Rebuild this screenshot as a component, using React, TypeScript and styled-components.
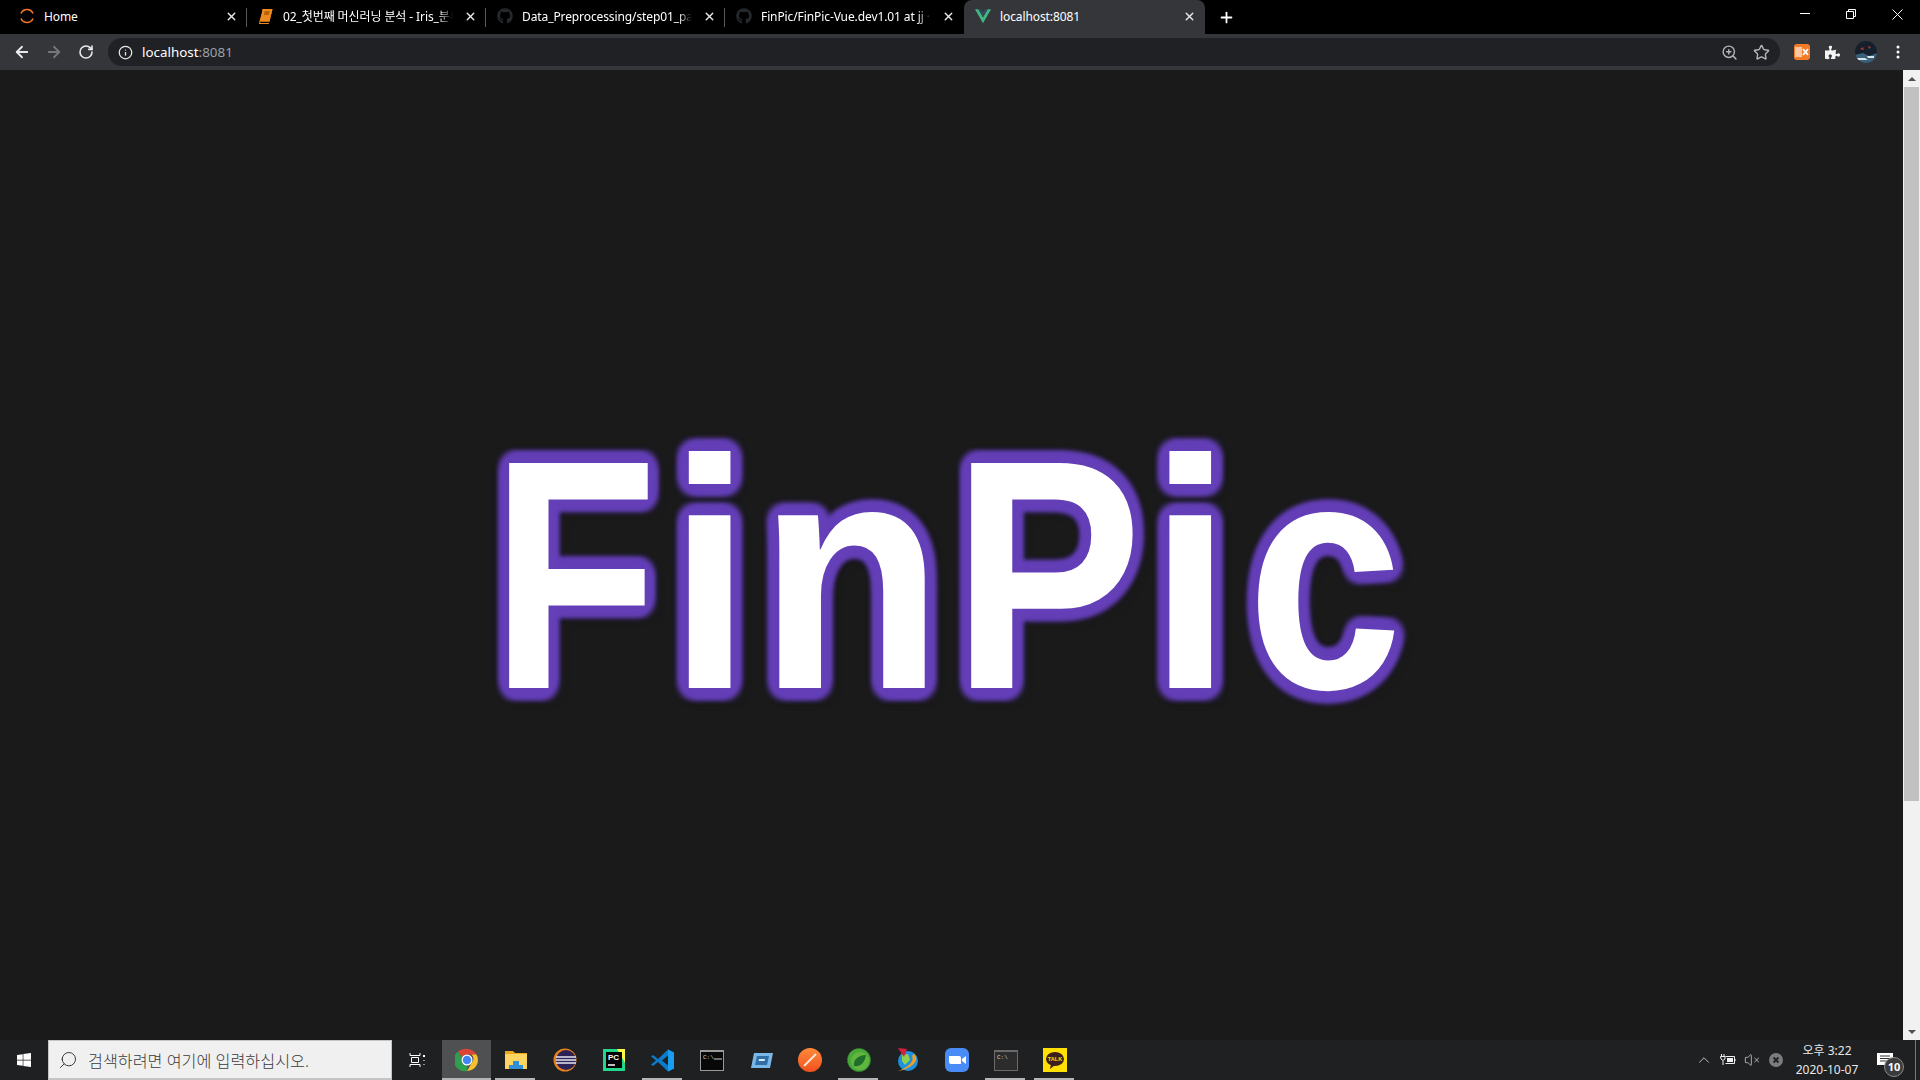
import React from "react";
import styled, { createGlobalStyle } from "styled-components";
import { ArrowLeft, ArrowRight, RotateCw, Info, ZoomIn, Star, X, Plus, ChevronUp, VolumeX, Search } from "lucide-react";
import { FaGithub, FaWindows, FaPuzzlePiece } from "react-icons/fa";

const ringShadow = (radius: number, blur: number, color: string, steps: number) =>
  Array.from({ length: steps }, (_, i) => {
    const a = (i / steps) * Math.PI * 2;
    return `${(Math.cos(a) * radius).toFixed(2)}px ${(Math.sin(a) * radius).toFixed(2)}px ${blur}px ${color}`;
  }).join(", ");

const GlobalStyle = createGlobalStyle`
  html, body { margin: 0; padding: 0; height: 100%; overflow: hidden; background: #1a1a1a; }
  * { box-sizing: border-box; }
`;

const Screen = styled.div`
  width: 1920px;
  height: 1080px;
  display: flex;
  flex-direction: column;
  font-family: "Noto Sans", "Noto Sans CJK KR", sans-serif;
  color: #fff;
  overflow: hidden;
`;

const TabStrip = styled.div`
  height: 34px;
  flex: none;
  background: #000;
  display: flex;
  padding-left: 8px;
`;

const Tab = styled.div<{ $active?: boolean; $last?: boolean }>`
  position: relative;
  width: ${(p) => (p.$active ? "241px" : "239px")};
  flex: none;
  display: flex;
  align-items: center;
  padding: 0 8px 2px 11px;
  gap: 9px;
  font-size: 12px;
  background: ${(p) => (p.$active ? "#35363a" : "transparent")};
  border-radius: ${(p) => (p.$active ? "8px 8px 0 0" : "0")};
  &::after {
    content: "";
    display: ${(p) => (p.$active || p.$last ? "none" : "block")};
    position: absolute;
    right: 0;
    top: 8px;
    bottom: 7px;
    width: 1px;
    background: #55585c;
  }
`;

const Favicon = styled.span`
  width: 16px;
  height: 16px;
  flex: none;
  display: flex;
  align-items: center;
  justify-content: center;
`;

const TabTitle = styled.span<{ $fade?: boolean }>`
  flex: 1;
  min-width: 0;
  overflow: hidden;
  white-space: nowrap;
  letter-spacing: -0.1px;
  mask-image: ${(p) => (p.$fade ? "linear-gradient(90deg, #000 92%, transparent)" : "none")};
`;

const TabClose = styled.span`
  width: 16px;
  height: 16px;
  flex: none;
  display: flex;
  align-items: center;
  justify-content: center;
  color: #e8eaed;
`;

const NewTab = styled.div`
  width: 42px;
  display: flex;
  align-items: center;
  justify-content: center;
  color: #fff;
`;

const WindowControls = styled.div`
  margin-left: auto;
  display: flex;
  height: 28px;
`;

const WindowButton = styled.div`
  width: 46px;
  display: flex;
  align-items: center;
  justify-content: center;
`;

const Toolbar = styled.div`
  height: 36px;
  flex: none;
  background: #35363a;
  display: flex;
  align-items: flex-start;
  padding-top: 4px;
`;

const NavGroup = styled.div`
  display: flex;
  padding-left: 6px;
  width: 108px;
`;

const NavButton = styled.div<{ $dim?: boolean }>`
  width: 32px;
  height: 28px;
  display: flex;
  align-items: center;
  justify-content: center;
  color: ${(p) => (p.$dim ? "#75777a" : "#e8eaed")};
`;

const Omnibox = styled.div`
  width: 1672px;
  height: 28px;
  background: #202124;
  border-radius: 14px;
  display: flex;
  align-items: center;
  padding: 0 9px 1px 10px;
  font-size: 13.4px;
`;

const SiteInfo = styled.span`
  display: flex;
  color: #e8eaed;
  margin-right: 9px;
  margin-top: 1px;
`;

const Host = styled.span`
  color: #fff;
`;

const Port = styled.span`
  color: #9aa0a6;
`;

const OmniIcons = styled.div`
  margin-left: auto;
  display: flex;
  gap: 15px;
  margin-top: 1px;
  color: #b4b6b8;
  padding-right: 1px;
`;

const Extensions = styled.div`
  display: flex;
  align-items: center;
  height: 28px;
  padding-left: 14px;
  gap: 14px;
`;

const OrangeExt = styled.div`
  width: 16px;
  height: 16px;
  border-radius: 3px;
  background: #f47b2a;
  display: flex;
  align-items: center;
  justify-content: center;
`;

const ExtSlot = styled.span<{ $narrow?: boolean }>`
  display: flex;
  width: ${(p) => (p.$narrow ? "13px" : "17px")};
  justify-content: center;
  color: #f1f3f4;
`;

const Middle = styled.div`
  flex: 1;
  min-height: 0;
  display: flex;
  background: #1a1a1a;
`;

const Content = styled.main`
  flex: 1;
  display: flex;
  justify-content: center;
  padding-top: 305px;
`;

const Logo = styled.h1`
  margin: 0;
  font-family: "Liberation Sans", sans-serif;
  font-weight: 700;
  font-size: 327px;
  line-height: 400px;
  height: 400px;
  color: #fff;
  transform: translateX(2px) scaleX(0.928);
  text-shadow: ${ringShadow(10.5, 7, "#6540b8", 16)}, ${ringShadow(6, 3, "#6540b8", 8)}, 6px 6px 16px rgba(0, 0, 0, 0.35);
`;

const Letter = styled.span<{ $track: number; $scale: number }>`
  display: inline-block;
  margin-right: ${(p) => p.$track}px;
  transform-origin: left center;
  transform: scaleX(${(p) => p.$scale});
`;

const Scrollbar = styled.div`
  width: 17px;
  flex: none;
  background: #f1f1f1;
  display: flex;
  flex-direction: column;
  align-items: center;
`;

const ScrollArrow = styled.div`
  height: 17px;
  width: 100%;
  flex: none;
  display: flex;
  align-items: center;
  justify-content: center;
`;

const Triangle = styled.span<{ $down?: boolean }>`
  width: 0;
  height: 0;
  border-left: 4px solid transparent;
  border-right: 4px solid transparent;
  border-${(p) => (p.$down ? "top" : "bottom")}: 4px solid #505050;
`;

const ScrollThumb = styled.div`
  width: 15px;
  height: 714px;
  flex: none;
  background: #c1c1c1;
`;

const ScrollSpacer = styled.div`
  flex: 1;
`;

const Taskbar = styled.footer`
  height: 40px;
  flex: none;
  background: #1f2021;
  display: flex;
  align-items: stretch;
`;

const StartButton = styled.div`
  width: 48px;
  display: flex;
  align-items: center;
  justify-content: center;
  color: #fff;
`;

const SearchBox = styled.div`
  width: 344px;
  background: #f0f0f0;
  border: 1px solid #c4c4c4;
  border-bottom-width: 2px;
  display: flex;
  align-items: center;
  padding-left: 9px;
  gap: 10px;
  color: #3b3b3b;
  font-size: 16.2px;
  font-weight: 300;
`;

const SearchGlyph = styled.span`
  display: flex;
  transform: scaleX(-1);
`;

const TaskView = styled.div`
  width: 50px;
  padding-right: 1px;
  display: flex;
  align-items: center;
  justify-content: center;
`;

const TaskCell = styled.div<{ $open?: boolean; $focus?: boolean }>`
  position: relative;
  width: 49px;
  display: flex;
  align-items: center;
  justify-content: center;
  background: ${(p) => (p.$focus ? "#4e5051" : "transparent")};
  &::after {
    content: "";
    display: ${(p) => (p.$open ? "block" : "none")};
    position: absolute;
    bottom: 0;
    left: ${(p) => (p.$focus ? "0" : "4px")};
    right: ${(p) => (p.$focus ? "0" : "5px")};
    height: 2px;
    background: #b4b5b5;
  }
`;

const Tray = styled.div`
  margin-left: auto;
  display: flex;
  align-items: center;
`;

const TrayIcon = styled.div<{ $w: number }>`
  width: ${(p) => p.$w}px;
  display: flex;
  justify-content: center;
  color: #f0f0f0;
`;

const Clock = styled.div`
  width: 72px;
  margin-left: 3px;
  text-align: center;
  font-size: 12px;
  line-height: 19px;
  color: #e8e8e8;
`;

const Notify = styled.div`
  position: relative;
  width: 46px;
  height: 100%;
  margin-left: 6px;
  display: flex;
  align-items: center;
  justify-content: flex-start;
  padding-left: 8px;
`;

const Badge = styled.span`
  position: absolute;
  left: 15px;
  top: 17px;
  width: 20px;
  height: 20px;
  border-radius: 50%;
  background: #3a3b3c;
  border: 1px solid #8a8a8a;
  font-size: 11px;
  font-weight: 700;
  line-height: 18px;
  text-align: center;
`;

const DesktopEdge = styled.div`
  width: 5px;
  height: 100%;
  border-left: 1px solid #77797a;
`;

const Vue = () => (
  <svg width="16" height="16" viewBox="0 0 24 24">
    <path d="M0 2h5l7 12L19 2h5L12 23z" fill="#41b883" />
    <path d="M5 2h4.500L12 6.500 14.500 2H19l-7 12z" fill="#35495e" />
  </svg>
);

const Loader = () => (
  <svg width="16" height="16" viewBox="0 0 16 16" fill="none" stroke="#f37726" strokeWidth="1.6">
    <path d="M2 5.500a6.500 6.500 0 0 1 12 0" />
    <path d="M2 10.500a6.500 6.500 0 0 0 12 0" />
  </svg>
);

const Book = () => (
  <svg width="14" height="16" viewBox="0 0 14 16">
    <path d="M4 1h9.500L10.500 13.500H1.500L1 15h9l-.2 1H0l.5-3z" fill="#f08a1c" />
    <path d="M3.500 1h10l-3 12.500h-9z" fill="#f08a1c" />
    <path d="M5.500 4h5M5 6h5" stroke="#7a3d00" strokeWidth="1" />
  </svg>
);

const Chrome = () => (
  <svg width="24" height="24" viewBox="0 0 48 48">
    <path d="M24 2a22 22 0 0 1 19 11H24a11 11 0 0 0-10 6L6 7a22 22 0 0 1 18-5z" fill="#db4437" />
    <path d="M43 13a22 22 0 0 1-19 33l10-17a11 11 0 0 0-1-16z" fill="#fbc02d" />
    <path d="M6 7l8 12a11 11 0 0 0 11 16l-1 11A22 22 0 0 1 6 7z" fill="#2e9e4f" />
    <circle cx="24" cy="24" r="11" fill="#fff" />
    <circle cx="24" cy="24" r="8.500" fill="#4285f4" />
  </svg>
);

const Explorer = () => (
  <svg width="24" height="24" viewBox="0 0 24 24">
    <path d="M1 3h8l2 2h12v6H1z" fill="#e8a91d" />
    <path d="M1 6h22v15H1z" fill="#fcd462" />
    <path d="M5 17h14v4H5z" fill="#2f90d8" />
    <path d="M9 13h6v4H9z" fill="#2f90d8" />
  </svg>
);

const Eclipse = () => (
  <svg width="24" height="24" viewBox="0 0 24 24">
    <circle cx="12" cy="12" r="11.500" fill="#e8801c" />
    <circle cx="13" cy="12" r="10" fill="#2c2255" />
    <path d="M3 9h20M3 12h20M3 15h20" stroke="#e6e6f0" strokeWidth="1.500" />
  </svg>
);

const PyCharm = () => (
  <svg width="22" height="24" viewBox="0 0 22 24">
    <path d="M0 1h22v22H0z" fill="#21d789" />
    <path d="M14 1h8v14z" fill="#fcf84a" />
    <path d="M3 4h16v16H3z" fill="#000" />
    <text x="5" y="12" fontSize="8" fontWeight="700" fontFamily="Liberation Sans" fill="#fff">PC</text>
    <path d="M5 17h7" stroke="#fff" strokeWidth="1.500" />
  </svg>
);

const VSCode = () => (
  <svg width="24" height="25" viewBox="0 0 24 24">
    <path d="M17 1l6 3v16l-6 3L7 13.500 2 17.500 0 16l5-4-5-4 2-1.500 5 4z" fill="#0a7ccb" />
    <path d="M17 7l-6 5 6 5z" fill="#1f2021" />
    <path d="M17 1l6 3v16l-6 3z" fill="#1a9cf0" />
  </svg>
);

const Terminal = ({ dim }: { dim?: boolean }) => (
  <svg width="24" height="21" viewBox="0 0 24 21">
    <path d="M0 0h24v21H0z" fill={dim ? "#6a6a6a" : "#9a9a9a"} />
    <path d="M1 2h22v18H1z" fill={dim ? "#2c2c2c" : "#080808"} />
    <text x="3" y="9" fontSize="6" fontFamily="Liberation Mono" fill="#cfcfcf">C:\</text>
    {!dim && <path d="M14 9h8" stroke="#cfcfcf" strokeWidth="1" />}
  </svg>
);

const Virtual = () => (
  <svg width="24" height="20" viewBox="0 0 24 20">
    <path d="M5 3h19l-3 15H2z" fill="#7ab6e6" />
    <path d="M8 6h12l-2 9H6z" fill="#2f6ea6" />
    <path d="M10 9h6l-.5 2h-6z" fill="#d9ecff" />
  </svg>
);

const Postman = () => (
  <svg width="24" height="24" viewBox="0 0 24 24">
    <defs>
      <linearGradient id="pm" x1="0" y1="0" x2="0" y2="1">
        <stop offset="0" stopColor="#ff8a3a" />
        <stop offset="1" stopColor="#f0501e" />
      </linearGradient>
    </defs>
    <circle cx="12" cy="12" r="12" fill="url(#pm)" />
    <path d="M6 18l10-10 2-2" stroke="#ffe3d3" strokeWidth="2" fill="none" />
  </svg>
);

const Spring = () => (
  <svg width="24" height="24" viewBox="0 0 24 24">
    <circle cx="12" cy="12" r="11.500" fill="#4aa93b" strokeDasharray="2 1" stroke="#2e7d2a" strokeWidth="1" />
    <circle cx="13" cy="13" r="9" fill="#62b53f" />
    <path d="M7 18c-1-7 5-11 12-11-1 7-5 12-12 11z" fill="#1e6f2b" />
  </svg>
);

const Globe = () => (
  <svg width="24" height="25" viewBox="0 0 24 25">
    <circle cx="12" cy="13" r="10" fill="#1e90e0" />
    <path d="M6 7l6-1 2 6-5 5-3-4z" fill="#8fd14f" />
    <path d="M2 0l9 1-3 8z" fill="#d81e3a" />
    <path d="M18 6c7 6-3 15-16 17 8-3 17-9 14-15z" fill="#f0a020" />
  </svg>
);

const Zoom = () => (
  <svg width="24" height="24" viewBox="0 0 24 24">
    <rect width="24" height="24" rx="6" fill="#4a8cf7" />
    <path d="M4 8h10a2 2 0 0 1 2 2v6H6a2 2 0 0 1-2-2z" fill="#fff" />
    <path d="M17 11l4-3v8l-4-3z" fill="#fff" />
  </svg>
);

const Kakao = () => (
  <svg width="24" height="24" viewBox="0 0 24 24">
    <path d="M0 0h24v24H0z" fill="#ffe000" />
    <ellipse cx="12" cy="11" rx="9" ry="7" fill="#3c1e1e" />
    <path d="M8 16l-1 5 5-4z" fill="#3c1e1e" />
    <text x="12" y="13" textAnchor="middle" fontSize="5.500" fontWeight="700" fontFamily="Liberation Sans" fill="#ffe000">TALK</text>
  </svg>
);

const Avatar = () => (
  <svg width="22" height="22" viewBox="0 0 22 22">
    <defs>
      <clipPath id="av"><circle cx="11" cy="11" r="11" /></clipPath>
    </defs>
    <g clipPath="url(#av)">
      <path d="M0 0h22v22H0z" fill="#15202c" />
      <path d="M0 14l8-2 6 3 8-3v10H0z" fill="#38607a" />
      <path d="M2 17h8l3 2H3zM12 15h7v2h-6z" fill="#d8e4ea" />
      <path d="M5 8l3-2 1 3zM13 5l3 1-2 2z" fill="#a83a2e" />
    </g>
  </svg>
);

const TaskViewIcon = () => (
  <svg width="16" height="16" viewBox="0 0 16 16" fill="none" stroke="#fff" strokeWidth="1">
    <path d="M1 1v2.500h10V1M2.500 5.500h7v5h-7zM1 15v-2.500h10V15" />
    <path d="M14 3h2v2h-2z" fill="#fff" stroke="none" />
    <path d="M15 8v1M15 12v1" />
  </svg>
);

const Battery = () => (
  <svg width="16" height="12" viewBox="0 0 16 12" fill="none" stroke="#f0f0f0">
    <path d="M5.500 2.500h9v7h-9" />
    <path d="M7 4h6v4H7z" fill="#f0f0f0" stroke="none" />
    <path d="M15 5v2" />
    <path d="M1.500 0v2M4 0v2M.5 2.500h4.500v2.500l-2 1.500-2-1.500zM3 7v4" />
  </svg>
);

const ErrorIcon = () => (
  <svg width="14" height="14" viewBox="0 0 14 14">
    <circle cx="7" cy="7" r="7" fill="#7c7c7c" />
    <path d="M4.500 4.500l5 5M9.500 4.500l-5 5" stroke="#222" strokeWidth="1.800" />
  </svg>
);

const NotifyIcon = () => (
  <svg width="16" height="14" viewBox="0 0 16 14">
    <path d="M0 0h16v12H0z" fill="#fff" />
    <path d="M3 3h10M3 5.500h10M3 8h7" stroke="#333" strokeWidth="1" />
  </svg>
);

const MinimizeIcon = () => (
  <svg width="10" height="10" viewBox="0 0 10 10" stroke="#fff" strokeWidth="1">
    <path d="M0 4.500h10" />
  </svg>
);

const RestoreIcon = () => (
  <svg width="10" height="10" viewBox="0 0 10 10" fill="none" stroke="#fff" strokeWidth="1">
    <path d="M.5 2.500h7v7h-7zM2.500 2.500v-2h7v7h-2" />
  </svg>
);

const CloseIcon = () => (
  <svg width="11" height="11" viewBox="0 0 11 11" stroke="#fff" strokeWidth="1">
    <path d="M.5.500l10 10M10.500.500l-10 10" />
  </svg>
);

const ExtGlyph = () => (
  <svg width="14" height="10" viewBox="0 0 14 10">
    <path d="M0 0h7v10H0z" fill="#f8c9a4" />
    <path d="M8 2l5 6M13 2L8 8" stroke="#fff" strokeWidth="1.800" />
  </svg>
);

const tabs = [
  { icon: <Loader />, title: "Home" },
  { icon: <Book />, title: "02_첫번째 머신러닝 분석 - Iris_분류", fade: true },
  { icon: <FaGithub size={16} color="#24292e" />, title: "Data_Preprocessing/step01_pandas", fade: true },
  { icon: <FaGithub size={16} color="#24292e" />, title: "FinPic/FinPic-Vue.dev1.01 at jj · FinPic", fade: true },
  { icon: <Vue />, title: "localhost:8081", active: true },
];

const apps: { node: React.ReactNode; open?: boolean; focus?: boolean }[] = [
  { node: <Chrome />, open: true, focus: true },
  { node: <Explorer />, open: true },
  { node: <Eclipse /> },
  { node: <PyCharm /> },
  { node: <VSCode />, open: true },
  { node: <Terminal /> },
  { node: <Virtual /> },
  { node: <Postman /> },
  { node: <Spring />, open: true },
  { node: <Globe /> },
  { node: <Zoom /> },
  { node: <Terminal dim />, open: true },
  { node: <Kakao />, open: true },
];

const logoLetters: [string, number, number][] = [
  ["F", -9.3, 0.9],
  ["i", 6.7, 1],
  ["n", 9, 1],
  ["P", -6.5, 0.94],
  ["i", 15.5, 1],
  ["c", 0, 0.92],
];

export default function App() {
  return (
    <Screen>
      <GlobalStyle />
      <TabStrip>
        {tabs.map((t, i) => (
          <Tab key={i} $active={t.active} $last={i === 3}>
            <Favicon>{t.icon}</Favicon>
            <TabTitle $fade={t.fade}>{t.title}</TabTitle>
            <TabClose><X size={13} strokeWidth={2.5} /></TabClose>
          </Tab>
        ))}
        <NewTab><Plus size={17} strokeWidth={2.5} /></NewTab>
        <WindowControls>
          <WindowButton><MinimizeIcon /></WindowButton>
          <WindowButton><RestoreIcon /></WindowButton>
          <WindowButton><CloseIcon /></WindowButton>
        </WindowControls>
      </TabStrip>
      <Toolbar>
        <NavGroup>
          <NavButton><ArrowLeft size={18} strokeWidth={2.4} /></NavButton>
          <NavButton $dim><ArrowRight size={18} strokeWidth={2.4} /></NavButton>
          <NavButton><RotateCw size={16} strokeWidth={2.4} /></NavButton>
        </NavGroup>
        <Omnibox>
          <SiteInfo><Info size={15} /></SiteInfo>
          <Host>localhost</Host><Port>:8081</Port>
          <OmniIcons>
            <ZoomIn size={17} />
            <Star size={17} />
          </OmniIcons>
        </Omnibox>
        <Extensions>
          <OrangeExt><ExtGlyph /></OrangeExt>
          <ExtSlot><FaPuzzlePiece size={15} /></ExtSlot>
          <Avatar />
          <ExtSlot $narrow>
            <svg width="4" height="14" viewBox="0 0 4 14" fill="#fff">
              <circle cx="2" cy="2" r="1.500" /><circle cx="2" cy="7" r="1.500" /><circle cx="2" cy="12" r="1.500" />
            </svg>
          </ExtSlot>
        </Extensions>
      </Toolbar>
      <Middle>
        <Content>
          <Logo>
            {logoLetters.map(([ch, track, scale], i) => (
              <Letter key={i} $track={track} $scale={scale}>{ch}</Letter>
            ))}
          </Logo>
        </Content>
        <Scrollbar>
          <ScrollArrow><Triangle /></ScrollArrow>
          <ScrollThumb />
          <ScrollSpacer />
          <ScrollArrow><Triangle $down /></ScrollArrow>
        </Scrollbar>
      </Middle>
      <Taskbar>
        <StartButton><FaWindows size={16} /></StartButton>
        <SearchBox>
          <SearchGlyph><Search size={20} strokeWidth={1.2} /></SearchGlyph>
          검색하려면 여기에 입력하십시오.
        </SearchBox>
        <TaskView><TaskViewIcon /></TaskView>
        {apps.map((a, i) => (
          <TaskCell key={i} $open={a.open} $focus={a.focus}>{a.node}</TaskCell>
        ))}
        <Tray>
          <TrayIcon $w={24}><ChevronUp size={18} strokeWidth={1} /></TrayIcon>
          <TrayIcon $w={24}><Battery /></TrayIcon>
          <TrayIcon $w={24}><VolumeX size={16} strokeWidth={1} /></TrayIcon>
          <TrayIcon $w={24}><ErrorIcon /></TrayIcon>
          <Clock>오후 3:22<br />2020-10-07</Clock>
          <Notify>
            <NotifyIcon />
            <Badge>10</Badge>
          </Notify>
          <DesktopEdge />
        </Tray>
      </Taskbar>
    </Screen>
  );
}
